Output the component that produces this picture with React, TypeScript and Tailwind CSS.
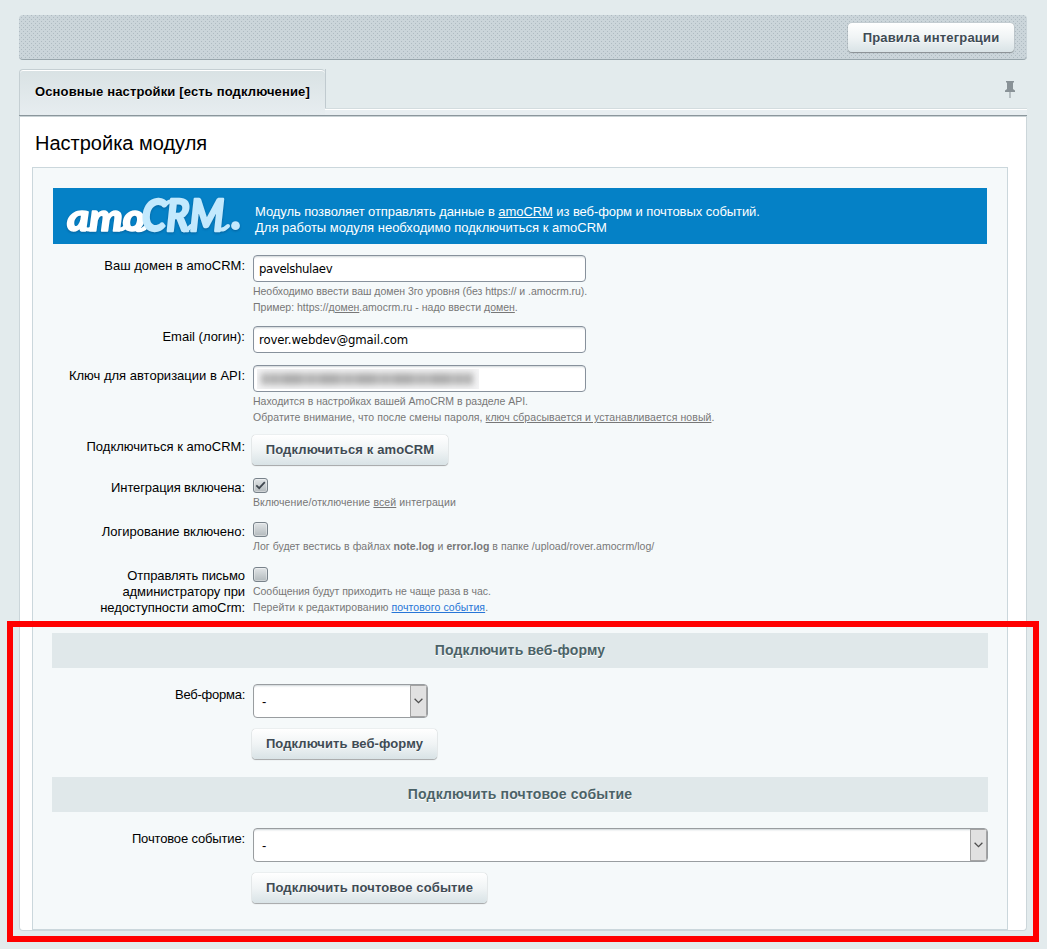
import type { ReactNode } from "react";

function Button({ children, className }: { children: ReactNode; className: string }) {
  return (
    <button
      type="button"
      className={`flex items-center justify-center whitespace-nowrap rounded-[4px] bg-linear-to-b from-white via-[#f0f4f5] to-[#d9e3e6] text-[13px] font-bold text-[#3f4b54] shadow-[0_0_1px_rgba(0,0,0,0.4),0_1px_1px_rgba(0,0,0,0.3)] [text-shadow:0_1px_rgba(255,255,255,0.7)] ${className}`}
    >
      {children}
    </button>
  );
}

function Row({ label, labelClass, className, children }: { label: ReactNode; labelClass: string; className: string; children: ReactNode }) {
  return (
    <div className={`flex gap-2 ${className}`}>
      <div className={`w-[192px] shrink-0 whitespace-nowrap text-right text-[13px] leading-4 ${labelClass}`}>{label}</div>
      <div className="min-w-0 flex-1">{children}</div>
    </div>
  );
}

function Field({ children, className }: { children: ReactNode; className?: string }) {
  return (
    <div className={`flex h-[27px] w-[333px] items-center rounded-[4px] border border-[#87919c] bg-white pl-[5px] pt-px font-['DejaVu_Sans_Condensed','Noto_Sans',sans-serif] text-[13px] shadow-[inset_0_2px_2px_-1px_#cfd5d8] ${className ?? ""}`}>
      {children}
    </div>
  );
}

function Hint({ children, className }: { children: ReactNode; className?: string }) {
  return <div className={`mt-px whitespace-nowrap text-[10.5px] leading-4 text-[#777] ${className ?? ""}`}>{children}</div>;
}

function Check({ checked }: { checked?: boolean }) {
  return (
    <div className="h-[15px] w-[15px] rounded-[3px] border border-[#78828a] bg-linear-to-b from-[#e1e5e7] to-[#b3babd] shadow-[inset_0_0_0_1px_rgba(255,255,255,0.35)]">
      {checked && (
        <svg viewBox="0 0 13 13" className="h-[13px] w-[13px]" fill="none" stroke="#3e464e" strokeWidth="1.7">
          <path d="M2.3 6.3 5.2 9.2 10.8 3.2" />
        </svg>
      )}
    </div>
  );
}

function Select({ className }: { className: string }) {
  return (
    <div className={`flex h-[34px] overflow-hidden rounded-[4px] border border-[#999da0] bg-white shadow-[inset_0_2px_2px_-1px_#cfd5d8] ${className}`}>
      <div className="flex-1 pl-2 pt-[9px] text-[13px] leading-4">-</div>
      <div className="flex w-[17px] items-center justify-center border border-[#a3a3a3] bg-[#e1e1e1] pr-px">
        <svg viewBox="0 0 9 6" className="h-[6px] w-[9px]" fill="none" stroke="#505050" strokeWidth="1.3">
          <path d="M.6.7 4.5 4.6 8.4.7" />
        </svg>
      </div>
    </div>
  );
}

function Heading({ children }: { children: ReactNode }) {
  return (
    <div className="-ml-px flex h-[35px] w-[936px] items-center justify-center bg-[#e0e8ea] text-[14px] font-bold tracking-[0.17px] text-[#4b6267] [text-shadow:0_1px_white]">
      {children}
    </div>
  );
}

function Logo() {
  return (
    <svg viewBox="0 0 190 56" className="h-14 w-[190px] shrink-0" fontFamily="Lato, sans-serif" fontStyle="italic" strokeLinejoin="round" strokeLinecap="round">
      <g className="drop-shadow-[0_1px_1px_rgba(0,40,80,0.35)]">
        <text x="14" y="43" fontSize="37" fontWeight="900" fill="white" stroke="white" strokeWidth="1.4" textLength="78" lengthAdjust="spacingAndGlyphs">amo</text>
        <path d="M33 41Q37 43 41 38M64 41Q69 43 73 38M84 42Q89 43 93 39" fill="none" stroke="white" strokeWidth="4" />
        <text x="89" y="43" fontSize="43" fontWeight="700" fill="#c3e9fd" stroke="#c3e9fd" strokeWidth="2.4" textLength="82" lengthAdjust="spacingAndGlyphs">CRM</text>
        <path d="M112 17Q116 12 124 13M130 42Q134 43 138 38M166 41Q170 43 175 38" fill="none" stroke="#c3e9fd" strokeWidth="4" />
        <circle cx="182.5" cy="37.7" r="4.4" fill="#c3e9fd" />
      </g>
    </svg>
  );
}

export default function App() {
  return (
    <div className="relative h-[949px] w-[1047px] overflow-hidden bg-[#e3ebed] px-[19px] pt-[15px] font-['Liberation_Sans',Arial,sans-serif] text-black">
      <header className="flex h-[45px] w-[1008px] justify-end rounded-[4px] border-b border-[#98a5ab] bg-[#cbd5da] bg-[radial-gradient(circle_at_0.5px_0.5px,#afbbc2_0.6px,transparent_0.7px),radial-gradient(circle_at_2.5px_2.5px,#afbbc2_0.6px,transparent_0.7px)] bg-[size:4px_4px] pr-[13px] pt-2">
        <Button className="h-[29px] w-[166px] tracking-[0.17px]">Правила интеграции</Button>
      </header>

      <div className="mt-[9px] flex h-[47px] w-[1008px] border-b border-[#8b969c]">
        <div className="w-[306px] rounded-t-[4px] border-l border-t border-[#c5cfd3] bg-linear-to-b from-[#d9e2e4] to-[#e7edf0] pl-[15px] pt-[14px] text-[13px] font-bold leading-4 tracking-[0.14px] shadow-[inset_0_1px_white] [text-shadow:0_1px_white]">
          <span className="whitespace-nowrap">Основные настройки [есть подключение]</span>
        </div>
        <div className="flex flex-1 flex-col border-l border-[#c0cacf]">
          <div className="flex h-[39px] justify-end pr-3 pt-[12px]">
            <svg viewBox="0 0 10 17" className="h-[17px] w-[10px]" fill="#899297">
              <path d="M1 0H9V1.5H8V8L10 9.5V11H0V9.5L2 8V1.5H1ZM4.5 11H5.5V17H4.5Z" />
            </svg>
          </div>
          <div className="-ml-px h-[7px] border-t border-[#d3dcdf] bg-[#e8eef1] shadow-[inset_0_1px_white]" />
        </div>
      </div>

      <main className="h-[815px] w-[1008px] rounded-b-[4px] border border-t-0 border-[#ccd6da] bg-white shadow-[inset_0_1px_#c9d2d5]">
        <h1 className="h-[51px] pl-[15px] pt-[15px] text-[20px] leading-6">Настройка модуля</h1>
        <section className="ml-3 h-[763px] w-[976px] border border-[#cbd7dc] bg-[#f5f9fa] pl-5 pt-5">
          <div className="flex h-14 w-[934px] bg-[#0581c6] text-[13px] leading-4 text-white">
            <Logo />
            <div className="whitespace-nowrap pl-3 pt-4">
              <p className="tracking-[-0.08px]">Модуль позволяет отправлять данные в <u>amoCRM</u> из веб-форм и почтовых событий.</p>
              <p>Для работы модуля необходимо подключиться к amoCRM</p>
            </div>
          </div>

          <Row label="Ваш домен в amoCRM:" labelClass="pt-[3px]" className="mt-[11px] h-[71px]">
            <Field className="tracking-[-0.35px]">pavelshulaev</Field>
            <Hint>
              <p className="tracking-[-0.03px]">Необходимо ввести ваш домен 3го уровня (без https:// и .amocrm.ru).</p>
              <p>Пример: https://<u>домен</u>.amocrm.ru - надо ввести <u>домен</u>.</p>
            </Hint>
          </Row>
          <Row label="Email (логин):" labelClass="pt-[3px]" className="h-[39px]">
            <Field className="tracking-[-0.12px]">rover.webdev@gmail.com</Field>
          </Row>
          <Row label="Ключ для авторизации в API:" labelClass="pt-[3px]" className="h-[70px]">
            <Field>
              <div className="-ml-0.5 flex h-5 w-[222px] items-center overflow-hidden bg-[#f4f4f5] pl-1">
                <div className="h-3 w-[212px] bg-[repeating-linear-gradient(90deg,#b0b0b0_0_5px,#c0c0c0_5px_8px,#b4b4b4_8px_19px,#bebebe_19px_22px,#adadad_22px_37px)] blur-[3px]" />
              </div>
            </Field>
            <Hint>
              <p>Находится в настройках вашей AmoCRM в разделе API.</p>
              <p className="tracking-[0.08px]">Обратите внимание, что после смены пароля, <u>ключ сбрасывается и устанавливается новый</u>.</p>
            </Hint>
          </Row>
          <Row label="Подключиться к amoCRM:" labelClass="pt-1" className="h-[43px]">
            <Button className="-ml-px h-[30px] w-[196px] tracking-[0.14px]">Подключиться к amoCRM</Button>
          </Row>
          <Row label="Интеграция включена:" labelClass="pt-[2px] tracking-[-0.1px]" className="h-11">
            <Check checked />
            <Hint className="tracking-[0.12px]">Включение/отключение <u>всей</u> интеграции</Hint>
          </Row>
          <Row label="Логирование включено:" labelClass="pt-[2px]" className="h-[45px]">
            <Check />
            <Hint className="tracking-[0.04px]">Лог будет вестись в файлах <b>note.log</b> и <b>error.log</b> в папке /upload/rover.amocrm/log/</Hint>
          </Row>
          <Row label={<>Отправлять письмо<br />администратору при<br />недоступности amoCrm:</>} labelClass="pt-px tracking-[-0.07px]" className="h-[66px]">
            <Check />
            <Hint>
              <p className="tracking-[-0.03px]">Сообщения будут приходить не чаще раза в час.</p>
              <p className="tracking-[0.09px]">Перейти к редактированию <u className="text-[#2675d7]">почтового события</u>.</p>
            </Hint>
          </Row>

          <Heading>Подключить веб-форму</Heading>
          <Row label="Веб-форма:" labelClass="pt-[3px] tracking-[-0.25px]" className="mt-4 h-[93px]">
            <Select className="w-[175px]" />
            <Button className="-ml-px mt-[11px] h-[30px] w-[185px] tracking-[0.1px]">Подключить веб-форму</Button>
          </Row>
          <Heading>Подключить почтовое событие</Heading>
          <Row label="Почтовое событие:" labelClass="pt-[3px] tracking-[-0.15px]" className="mt-4">
            <Select className="w-[735px]" />
            <Button className="-ml-px mt-[11px] h-[30px] w-[235px] tracking-[0.11px]">Подключить почтовое событие</Button>
          </Row>
        </section>
      </main>

      <div className="pointer-events-none absolute left-[7px] top-[621px] h-[321px] w-[1032px] border-[6px] border-[#ff0000]" />
    </div>
  );
}
